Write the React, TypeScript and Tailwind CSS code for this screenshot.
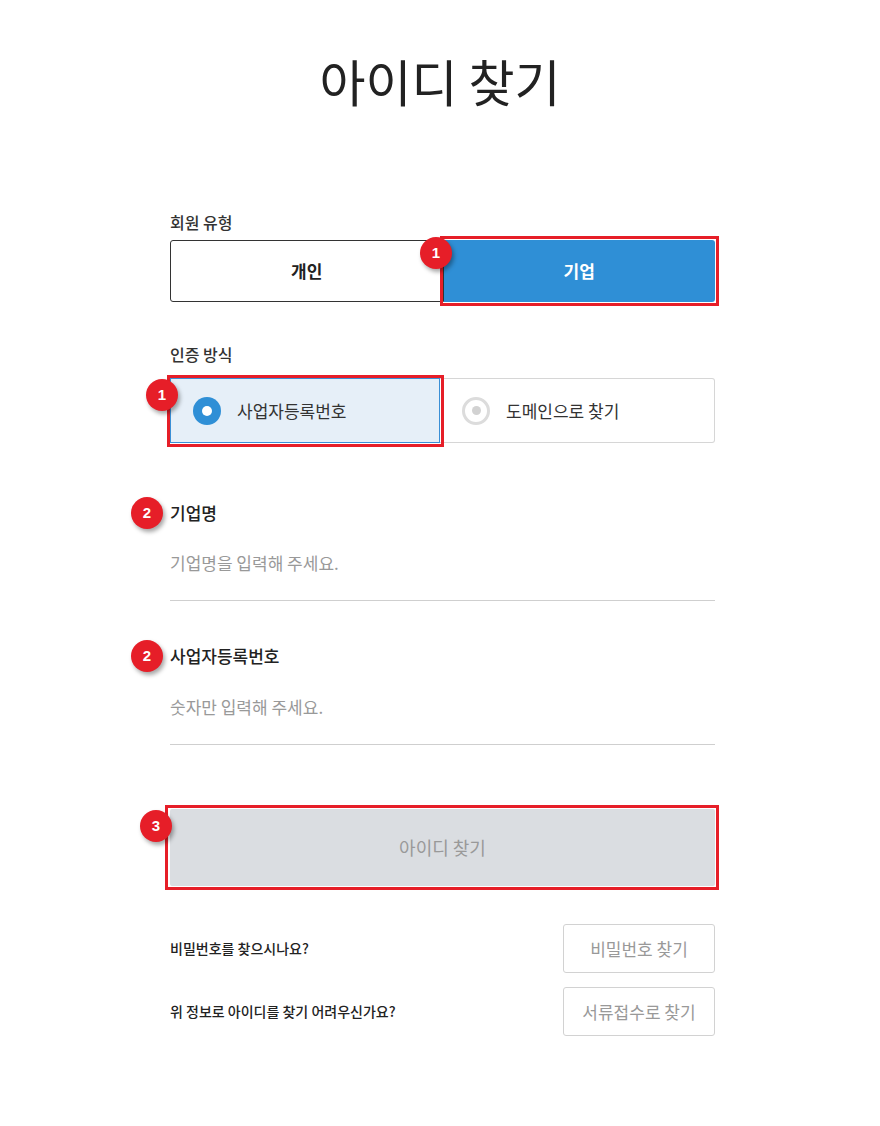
import React from 'react';

const font = { fontFamily: `'Noto Sans CJK KR', 'Noto Sans', sans-serif` };

const Badge = ({ n, className }: { n: number; className: string }) => (
  <span
    className={`absolute z-10 flex h-[32px] w-[32px] items-center justify-center rounded-full bg-[#e61e28] text-[15px] font-bold text-white shadow-[2px_3px_4px_rgba(0,0,0,0.35)] ${className}`}
    style={{ fontFamily: `'Liberation Sans', Arial, sans-serif` }}
  >
    {n}
  </span>
);

const App: React.FC = () => {
  return (
    <div className="min-h-screen bg-white text-[#222]" style={font}>
      {/* Title */}
      <h1 className="pt-[50px] text-center text-[50px] leading-[60px] font-normal text-[#222]">
        아이디 찾기
      </h1>

      <div className="ml-[170px] w-[545px]">
        {/* 회원 유형 */}
        <p className="mt-[100px] text-[16px] leading-[24px] font-medium text-[#333]">회원 유형</p>
        <div className="relative mt-[6px] flex h-[62px]">
          <button className="flex-1 rounded-l-[3px] border border-[#333] bg-white text-[17px] font-bold text-[#222]">
            개인
          </button>
          <button className="flex-1 rounded-r-[3px] bg-[#2f8fd6] text-[17px] font-bold text-white">
            기업
          </button>
          <span className="pointer-events-none absolute -top-[4px] -bottom-[4px] left-[270px] -right-[4px] border-[3px] border-[#e61e28]" />
          <Badge n={1} className="left-[250px] -top-[3px]" />
        </div>

        {/* 인증 방식 */}
        <p className="mt-[40px] text-[16px] leading-[24px] font-medium text-[#333]">인증 방식</p>
        <div className="relative mt-[12px] flex h-[65px]">
          <div className="flex w-[270px] items-center gap-[16px] border border-[#3a8fd6] bg-[#e6eff8] pl-[22px]">
            <span className="flex h-[28px] w-[28px] items-center justify-center rounded-full bg-[#2f8fd6]">
              <span className="h-[10px] w-[10px] rounded-full bg-white" />
            </span>
            <span className="text-[17px] text-[#333]">사업자등록번호</span>
          </div>
          <div className="flex flex-1 items-center gap-[16px] rounded-r-[3px] border border-l-0 border-[#d6d6d6] bg-white pl-[22px]">
            <span className="flex h-[28px] w-[28px] items-center justify-center rounded-full border-[3px] border-[#dcdcdc]">
              <span className="h-[9px] w-[9px] rounded-full bg-[#d2d2d2]" />
            </span>
            <span className="text-[17px] text-[#333]">도메인으로 찾기</span>
          </div>
          <span className="pointer-events-none absolute -top-[3px] -bottom-[4px] -left-[3px] w-[277px] border-[3px] border-[#e61e28]" />
          <Badge n={1} className="-left-[24px] top-[1px]" />
        </div>

        {/* 기업명 */}
        <div className="relative mt-[57px]">
          <p className="text-[17px] leading-[26px] font-medium text-[#222]">기업명</p>
          <Badge n={2} className="-left-[39px] -top-[3px]" />
        </div>
        <div className="mt-[24px] border-b border-[#cfcfcf] pb-[24px] text-[17px] leading-[26px] text-[#999]">
          기업명을 입력해 주세요.
        </div>

        {/* 사업자등록번호 */}
        <div className="relative mt-[42px]">
          <p className="text-[17px] leading-[26px] font-medium text-[#222]">사업자등록번호</p>
          <Badge n={2} className="-left-[39px] -top-[3px]" />
        </div>
        <div className="mt-[25px] border-b border-[#cfcfcf] pb-[24px] text-[17px] leading-[26px] text-[#999]">
          숫자만 입력해 주세요.
        </div>

        {/* 아이디 찾기 button */}
        <div className="relative mt-[64px]">
          <button className="h-[77px] w-full rounded-[2px] bg-[#dadde1] text-[18px] text-[#999]">
            아이디 찾기
          </button>
          <span className="pointer-events-none absolute -top-[4px] -bottom-[4px] -left-[5px] -right-[4px] border-[3px] border-[#e61e28]" />
          <Badge n={3} className="-left-[30px] top-[1px]" />
        </div>

        {/* Bottom links */}
        <div className="mt-[38px] flex items-center justify-between">
          <p className="text-[14px] font-medium text-[#222]">비밀번호를 찾으시나요?</p>
          <button className="h-[49px] w-[152px] rounded-[3px] border border-[#d2d2d2] bg-white text-[17px] text-[#999]">
            비밀번호 찾기
          </button>
        </div>
        <div className="mt-[14px] flex items-center justify-between">
          <p className="text-[14px] font-medium text-[#222]">위 정보로 아이디를 찾기 어려우신가요?</p>
          <button className="h-[49px] w-[152px] rounded-[3px] border border-[#d2d2d2] bg-white text-[17px] text-[#999]">
            서류접수로 찾기
          </button>
        </div>
      </div>
    </div>
  );
};

export default App;
